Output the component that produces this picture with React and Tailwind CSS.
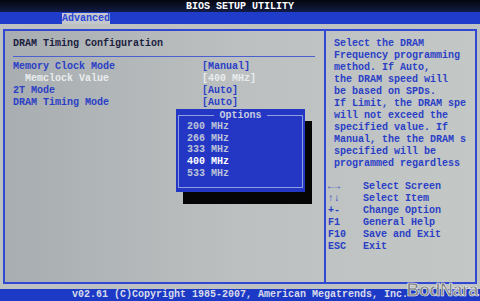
import React from 'react';

const rows = [
  { label: 'Memory Clock Mode', value: '[Manual]' },
  { label: 'Memclock Value', value: '[400 MHz]', sub: true },
  { label: '2T Mode', value: '[Auto]' },
  { label: 'DRAM Timing Mode', value: '[Auto]' },
];

const help = [
  'Select the DRAM',
  'Frequency programming',
  'method. If Auto,',
  'the DRAM speed will',
  'be based on SPDs.',
  'If Limit, the DRAM spe',
  'will not exceed the',
  'specified value. If',
  'Manual, the the DRAM s',
  'specified will be',
  'programmed regardless',
];

const keys = [
  ['←→', 'Select Screen'],
  ['↑↓', 'Select Item'],
  ['+-', 'Change Option'],
  ['F1', 'General Help'],
  ['F10', 'Save and Exit'],
  ['ESC', 'Exit'],
];

const options = ['200 MHz', '266 MHz', '333 MHz', '400 MHz', '533 MHz'];

function OptionsPopup() {
  return (
    <div className="absolute left-[171px] top-[78px] w-[129px] h-[83px] bg-[#2337c4] shadow-[7px_12px_0_#050505] pt-[6px] pb-[4px] px-[2px]">
      <div className="relative h-full border border-[#8f9ee0] pt-[5px] pl-[8px]">
        <div className="absolute -top-[6px] left-0 right-0 flex justify-center">
          <span className="bg-[#2337c4] px-[5px] text-[#c9cde0]">Options</span>
        </div>
        {options.map((o) => (
          <div key={o} className={o === '400 MHz' ? 'text-white h-[11.7px]' : 'text-[#bcc2d8] h-[11.7px]'}>
            {o}
          </div>
        ))}
      </div>
    </div>
  );
}

export default function App() {
  return (
    <div
      className="relative w-[480px] h-[301px] overflow-hidden bg-[#bdc1c1] flex flex-col text-[10px] leading-[12px] font-bold whitespace-pre"
      style={{ fontFamily: '"Liberation Mono", "DejaVu Sans Mono", monospace' }}
    >
      <div className="h-[12px] bg-gradient-to-b from-[#05070f] to-[#121c48] flex justify-center items-center text-white pt-[1px]">
        BIOS SETUP UTILITY
      </div>
      <div className="h-[12px] bg-[#1f3ccb] pl-[62px] flex items-end">
        <div className="h-[11px] w-[48px] bg-[#c4c8cc] text-[#2a44d8] leading-[11px]">Advanced</div>
      </div>

      <div className="pt-[5px] px-[3px]">
        <div className="h-[255px] border-2 border-[#3048d4] flex bg-gradient-to-r from-[#a8adb1] via-[#bcc0c0] to-[#c3c7c6]">
          <div className="relative w-[321px] border-r-2 border-[#3048d4] pl-[8px] pr-[9px] pt-[7px]">
            <div className="text-[#1b2040] pb-[6px] border-b border-[#4a5fd0]">DRAM Timing Configuration</div>
            <div className="pt-[4px]">
              {rows.map((r) => (
                <div key={r.label} className={r.sub ? 'flex text-[#e9edee]' : 'flex text-[#2a3fc6]'}>
                  <span className={r.sub ? 'w-[189px] pl-[12px]' : 'w-[189px]'}>{r.label}</span>
                  <span>{r.value}</span>
                </div>
              ))}
            </div>
            <OptionsPopup />
          </div>

          <div className="flex-1 flex flex-col text-[#2a3fc6] pt-[7px]">
            <div className="pl-[8px]">
              {help.map((l) => (
                <div key={l}>{l}</div>
              ))}
            </div>
            <div className="pl-[2px] pt-[11px]">
              {keys.map(([k, d]) => (
                <div key={k} className="flex">
                  <span className="w-[35px]">{k}</span>
                  <span>{d}</span>
                </div>
              ))}
            </div>
          </div>
        </div>
      </div>

      <div className="mt-auto h-[12px] bg-[#1c3ac6] flex justify-center items-center text-[#d8dcea]">
        v02.61 (C)Copyright 1985-2007, American Megatrends, Inc.
      </div>

      <div
        className="absolute right-[2px] bottom-[1px] text-[18px] leading-[20px] font-bold text-[#7d8080] tracking-[-0.5px]"
        style={{ fontFamily: '"Liberation Sans", sans-serif', WebkitTextStroke: '0.6px #f2f2f2' }}
      >
        BodNara
      </div>
    </div>
  );
}
